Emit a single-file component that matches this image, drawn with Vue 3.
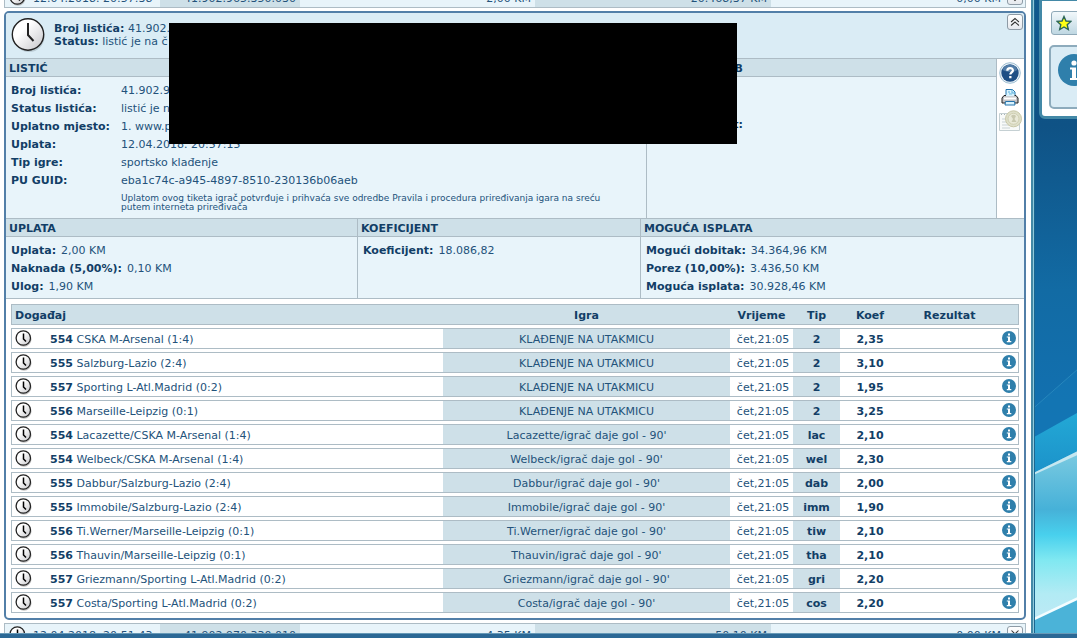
<script setup>
const labels = [
  ['Broj listića:', '41.902.9'],
  ['Status listića:', 'listić je n'],
  ['Uplatno mjesto:', '1. www.p'],
  ['Uplata:', '12.04.2018. 20:57:15'],
  ['Tip igre:', 'sportsko klađenje'],
  ['PU GUID:', 'eba1c74c-a945-4897-8510-230136b06aeb'],
]
const sums = [
  { title: 'UPLATA', lines: [['Uplata:', '2,00 KM'], ['Naknada (5,00%):', '0,10 KM'], ['Ulog:', '1,90 KM']] },
  { title: 'KOEFICIJENT', lines: [['Koeficijent:', '18.086,82']] },
  { title: 'MOGUĆA ISPLATA', lines: [['Mogući dobitak:', '34.364,96 KM'], ['Porez (10,00%):', '3.436,50 KM'], ['Moguća isplata:', '30.928,46 KM']] },
]
const main = 'KLAĐENJE NA UTAKMICU'
const events = [
  ['554', 'CSKA M-Arsenal (1:4)', main, '2', '2,35'],
  ['555', 'Salzburg-Lazio (2:4)', main, '2', '3,10'],
  ['557', 'Sporting L-Atl.Madrid (0:2)', main, '2', '1,95'],
  ['556', 'Marseille-Leipzig (0:1)', main, '2', '3,25'],
  ['554', 'Lacazette/CSKA M-Arsenal (1:4)', "Lacazette/igrač daje gol - 90'", 'lac', '2,10'],
  ['554', 'Welbeck/CSKA M-Arsenal (1:4)', "Welbeck/igrač daje gol - 90'", 'wel', '2,30'],
  ['555', 'Dabbur/Salzburg-Lazio (2:4)', "Dabbur/igrač daje gol - 90'", 'dab', '2,00'],
  ['555', 'Immobile/Salzburg-Lazio (2:4)', "Immobile/igrač daje gol - 90'", 'imm', '1,90'],
  ['556', 'Ti.Werner/Marseille-Leipzig (0:1)', "Ti.Werner/igrač daje gol - 90'", 'tiw', '2,10'],
  ['556', 'Thauvin/Marseille-Leipzig (0:1)', "Thauvin/igrač daje gol - 90'", 'tha', '2,10'],
  ['557', 'Griezmann/Sporting L-Atl.Madrid (0:2)', "Griezmann/igrač daje gol - 90'", 'gri', '2,20'],
  ['557', 'Costa/Sporting L-Atl.Madrid (0:2)', "Costa/igrač daje gol - 90'", 'cos', '2,20'],
]
</script>

<template>
  <div class="page">
    <svg class="defs" width="0" height="0" aria-hidden="true">
      <defs>
        <linearGradient id="face" x1="0" y1="0" x2="1" y2="1">
          <stop offset="0.35" stop-color="#fff" /><stop offset="1" stop-color="#c4c4c8" />
        </linearGradient>
        <symbol id="clock" viewBox="0 0 34 34">
          <circle cx="18" cy="18.500" r="15.500" fill="#9aa9b2" opacity=".5" />
          <circle cx="17" cy="16.500" r="15.700" fill="url(#face)" stroke="#222" stroke-width="1.400" />
          <path d="M17 5v12l5.500 6" fill="none" stroke="#222" stroke-width="2" />
        </symbol>
        <symbol id="clock-small" viewBox="0 0 17 17">
          <circle cx="9" cy="9.200" r="7.500" fill="#999" opacity=".6" />
          <circle cx="8.300" cy="8" r="7.200" fill="url(#face)" stroke="#222" stroke-width="1.300" />
          <path d="M8.500 3.500v5.500l2.500 2.500" fill="none" stroke="#000" stroke-width="1.500" />
        </symbol>
        <symbol id="info" viewBox="0 0 14 14">
          <circle cx="7" cy="7" r="7" fill="#2f7fab" />
          <path d="M6 2.500h2v2H6zM4.800 5.500H8V10h1.300v1.200H4.800V10H6V6.600H4.800z" fill="#fff" />
        </symbol>
      </defs>
    </svg>

    <div class="columns">
      <main class="content">
        <div class="clip-top">
          <div class="strip">
            <svg class="small-clock"><use href="#clock-small" /></svg>
            <span class="date">12.04.2018. 20:57:38</span>
            <span class="num tinted">41.902.965.350.030</span>
            <span class="num">2,00 KM</span>
            <span class="num tinted">20.468,37 KM</span>
            <span class="num">0,00 KM</span>
            <button class="toggle" aria-label="Otvori"><svg viewBox="0 0 16 16"><path d="M4 4l4 4 4-4M4 8l4 4 4-4" /></svg></button>
          </div>
        </div>

        <section class="ticket">
          <header class="ticket-head">
            <svg class="big-clock"><use href="#clock" /></svg>
            <p><b>Broj listića:</b> 41.902.9<br /><b>Status:</b> listić je na č</p>
            <button class="toggle" aria-label="Zatvori"><svg viewBox="0 0 16 16"><path d="M3.500 8L8 4l4.500 4M3.500 12L8 8l4.500 4" /></svg></button>
          </header>

          <div class="details">
            <section class="detail-main">
              <h2>LISTIĆ</h2>
              <dl class="labels">
                <div v-for="l in labels" :key="l[0]"><dt>{{ l[0] }}</dt><dd>{{ l[1] }}</dd></div>
              </dl>
              <p class="notice">Uplatom ovog tiketa igrač potvrđuje i prihvaća sve odredbe Pravila i procedura priređivanja igara na sreću putem interneta priređivača</p>
            </section>
            <section class="detail-extra">
              <h2><span>B</span></h2>
              <b class="extra-label">t:</b>
            </section>
            <nav class="tools">
              <button aria-label="Pomoć">
                <svg width="22" height="22" viewBox="0 0 22 22">
                  <circle cx="11" cy="11" r="10.300" fill="#edf4f8" stroke="#9fbfd3" />
                  <circle cx="11" cy="11" r="8.700" fill="#1e4f85" />
                  <path d="M3.500 8a8 8 0 0 1 15 0q-7 4-15 0" fill="#6f96bb" opacity=".65" />
                  <path d="M8.300 8.700c0-3.400 5.600-3.400 5.600-.3 0 2-2.600 2-2.600 4.200" fill="none" stroke="#fff" stroke-width="2.200" />
                  <path d="M10.200 14h2.300v2.200h-2.300z" fill="#fff" />
                </svg>
              </button>
              <button aria-label="Ispis">
                <svg width="18" height="18" viewBox="0 0 18 18">
                  <path d="M5 8V1.500h6.500L14 4v4" fill="#d9f2fd" stroke="#2474ad" />
                  <path d="M11 1.500V5h3M7 4h2M8 6h3" fill="none" stroke="#57aeda" />
                  <path d="M3 7.500h12l2 2.500v5H1v-5z" fill="#c2c2c5" stroke="#222" />
                  <path d="M5 7.500h8.500" stroke="#d9f2fd" stroke-width="1.500" />
                  <path d="M3 10.500h12" stroke="#fff" stroke-width="2" />
                  <path d="M4.500 13.500h9l.5 3.500H4z" fill="#d9f2fd" stroke="#2474ad" />
                </svg>
              </button>
              <button aria-label="Isplata">
                <svg width="24" height="22" viewBox="0 0 24 22">
                  <path d="M1.500 3.500h20v17h-20z" fill="#f8faf9" stroke="#c5d0d3" />
                  <path d="M3 4.500h12" stroke="#a8b2b4" stroke-dasharray="1 2" />
                  <path d="M4 9h8M4 12h9M4 15h12M4 18h8" stroke="#c9d2d5" />
                  <circle cx="15.500" cy="8.800" r="8" fill="#dedfca" stroke="#c9c8a8" />
                  <circle cx="15.500" cy="8.800" r="5.500" fill="#e9e9d8" stroke="#cfcfb2" />
                  <path d="M13 6q2.500-2.500 5 0l-1.500 3 2 3h-5l1.500-3z" fill="#c9c9b0" />
                </svg>
              </button>
            </nav>
          </div>

          <div class="sums">
            <section v-for="s in sums" :key="s.title">
              <h2>{{ s.title }}</h2>
              <p v-for="l in s.lines" :key="l[0]"><b>{{ l[0] }}</b><span>{{ l[1] }}</span></p>
            </section>
          </div>

          <div class="table-wrap">
            <table>
              <colgroup><col /><col class="c-game" /><col class="c-time" /><col class="c-tip" /><col class="c-koef" /><col class="c-res" /><col class="c-info" /></colgroup>
              <thead>
                <tr><th class="first">Događaj</th><th>Igra</th><th>Vrijeme</th><th>Tip</th><th>Koef</th><th>Rezultat</th><th></th></tr>
              </thead>
              <tbody>
                <tr v-for="(e, i) in events" :key="i">
                  <td class="first"><div class="event"><svg class="small-clock"><use href="#clock-small" /></svg><span><b>{{ e[0] }}</b> {{ e[1] }}</span></div></td>
                  <td class="tinted">{{ e[2] }}</td>
                  <td class="time">čet,21:05</td>
                  <td class="tinted"><b>{{ e[3] }}</b></td>
                  <td><b>{{ e[4] }}</b></td>
                  <td></td>
                  <td class="last"><button class="info" aria-label="Info"><svg width="14" height="14"><use href="#info" /></svg></button></td>
                </tr>
              </tbody>
            </table>
          </div>
          <div class="cover"></div>
        </section>

        <div class="clip-bottom">
          <div class="strip">
            <svg class="small-clock"><use href="#clock-small" /></svg>
            <span class="date">12.04.2018. 20:51:43</span>
            <span class="num tinted">41.902.970.330.010</span>
            <span class="num">4,35 KM</span>
            <span class="num tinted">50,10 KM</span>
            <span class="num">0,00 KM</span>
            <button class="toggle" aria-label="Otvori"><svg viewBox="0 0 16 16"><path d="M4 4l4 4 4-4M4 8l4 4 4-4" /></svg></button>
          </div>
        </div>
      </main>

      <aside class="side">
        <svg class="scene" viewBox="0 0 46 638" preserveAspectRatio="none" aria-hidden="true">
          <defs>
            <linearGradient id="deep" x1="0" y1="0" x2="0" y2="1">
              <stop offset="0" stop-color="#105a8e" /><stop offset=".28" stop-color="#0f5285" /><stop offset=".65" stop-color="#126ba4" /><stop offset="1" stop-color="#1272b4" />
            </linearGradient>
            <linearGradient id="band" x1="0" y1="0" x2="0" y2="1">
              <stop offset="0" stop-color="#23a9d6" /><stop offset="1" stop-color="#1b8fc8" />
            </linearGradient>
            <linearGradient id="water" x1="0" y1="0" x2="0" y2="1">
              <stop offset="0" stop-color="#7dcbe1" /><stop offset=".35" stop-color="#46b1d8" /><stop offset=".5" stop-color="#48d0ed" /><stop offset=".65" stop-color="#80e8f1" /><stop offset=".85" stop-color="#b2ebf4" /><stop offset="1" stop-color="#bde9f5" />
            </linearGradient>
          </defs>
          <path d="M0 0h46v450H0z" fill="url(#deep)" />
          <path d="M0 410l46-39v46L0 440z" fill="#1478b6" opacity=".6" />
          <path d="M0 410l46-39" stroke="#3796c5" opacity=".6" />
          <path d="M0 440l46-25v45L0 484z" fill="url(#band)" />
          <path d="M0 476l46-22v170H0z" fill="url(#water)" />
          <path d="M0 476l46-22v4L0 478z" fill="#c6e7f0" />
          <path d="M0 623l46-21v40H0z" fill="#4bb3d8" />
          <path d="M0 622l46-21v3L0 625z" fill="#f4fdff" />
        </svg>
        <div class="side-box">
          <button class="fav" aria-label="Favoriti">
            <svg width="16" height="16" viewBox="0 0 16 16"><path d="M8 1.500l2 4.500 4.800.4-3.600 3.300 1.100 4.800L8 12l-4.300 2.500 1.100-4.800L1.200 6.400 6 6z" fill="#ffff14" stroke="#2b6556" stroke-width="1.400" /></svg>
          </button>
          <div class="side-info">
            <svg width="32" height="32" viewBox="0 0 32 32"><circle cx="16" cy="16" r="16" fill="#2f7fab" /><circle cx="16" cy="9" r="2.600" fill="#fff" /><path d="M12 13.500h6V24h2v2h-8v-2h2v-8.500h-2z" fill="#fff" /></svg>
          </div>
        </div>
      </aside>
    </div>
    <footer class="bottom-bar"></footer>
  </div>
</template>

<style>
body { margin: 0; overflow: hidden; }
</style>

<style scoped>
.page { height: 100vh; display: flex; flex-direction: column; font: 11px/18px Verdana, "DejaVu Sans", sans-serif; color: #23527a; background: #fff; }
.page * { box-sizing: border-box; }
.defs { position: absolute; }
.columns { flex: 1; min-height: 0; display: flex; }
.content { flex: 1; min-width: 0; display: flex; flex-direction: column; padding: 0 5px 0 4px; overflow: hidden; }
b, h2, th, dt { font-weight: bold; color: #123e66; }
p, dl, dd, h2 { margin: 0; }
button { padding: 0; border: 0; background: none; font: inherit; cursor: pointer; }
.clip-top { height: 8px; display: flex; flex-direction: column; justify-content: flex-end; overflow: hidden; margin-bottom: 3px; flex: none; }
.clip-bottom { flex: 1; min-height: 0; overflow: hidden; margin-top: 3px; }
.strip { flex: none; height: 22px; display: grid; grid-template-columns: 28px 127px 140px 235px 236px 1fr 20px; align-items: center; border: 1px solid #adbcc5; background: #e8f4fa; line-height: 16px; }
.strip span { padding-top: 4px; }
.strip .small-clock { margin-left: 4px; }
.strip .num { padding-right: 4px; text-align: right; white-space: nowrap; }
.date { white-space: nowrap; }
.tinted { background: #cee0e8; }
.small-clock { width: 17px; height: 17px; display: block; flex: none; }
.toggle { width: 16px; height: 16px; border: 1px solid #8e9ba6; border-radius: 3px; background: linear-gradient(#fff, #e6e9ee); display: block; }
.strip .toggle { margin-left: 2px; }
.toggle svg { display: block; width: 14px; height: 14px; fill: none; stroke: #333; stroke-width: 1.2; }

.ticket { flex: none; position: relative; border: 2px solid #527fa8; border-radius: 5px; background: #fff; overflow: hidden; }
.ticket-head { display: flex; height: 45px; background: #daecf5; padding: 0 1px 0 5px; line-height: 13px; }
.ticket-head p { flex: 1; padding: 9px 0 0 9px; }
.big-clock { width: 34px; height: 34px; margin-top: 5px; flex: none; }
.ticket-head .toggle { margin-top: 1px; }
.cover { position: absolute; left: 163px; top: 10px; width: 568px; height: 121px; background: #000; }

h2 { font-size: 11px; line-height: 19px; height: 18px; padding-left: 3px; background: #cee0e8; border-bottom: 1px solid #adbcc5; }
.details { display: grid; grid-template-columns: 641fr 349fr 28px; border-top: 1px solid #adbcc5; background: #e8f4fa; min-height: 160px; }
.detail-main { border-right: 1px solid #adbcc5; }
.labels { padding: 5px 0 4px 5px; }
.labels div { display: flex; }
.labels dt { width: 110px; }
.notice { font-size: 9px; line-height: 9px; padding: 0 20px 5px 115px; }
.detail-extra h2 { padding: 0; }
.detail-extra h2 span, .extra-label { display: block; width: 96px; text-align: right; }
.extra-label { margin-top: 39px; }
.tools { background: #fff; border-left: 1px solid #adbcc5; display: flex; flex-direction: column; align-items: center; padding: 3px 2px 0 0; gap: 4px; }
.tools svg { display: block; }

.sums { display: grid; grid-template-columns: 351fr 283fr 384fr; border-top: 1px solid #adbcc5; border-bottom: 1px solid #adbcc5; background: #e8f4fa; }
.sums section { padding-bottom: 2px; }
.sums section + section { border-left: 1px solid #adbcc5; }
.sums h2 { margin-bottom: 5px; }
.sums p { padding-left: 5px; display: flex; gap: 5px; }

.table-wrap { padding: 2px 5px; }
table { width: 100%; table-layout: fixed; border-collapse: separate; border-spacing: 0 3px; }
.c-game { width: 287px; } .c-time { width: 63px; } .c-tip { width: 47px; } .c-koef { width: 60px; } .c-res { width: 99px; } .c-info { width: 20px; }
th, td { height: 21px; padding: 2px 0 0; text-align: center; white-space: nowrap; line-height: 17px; border: solid #adbcc5; border-width: 1px 0; }
th { background: #cee0e8; }
th:last-child, td.last { border-right-width: 1px; }
td.last { padding: 0 0 1px; }
.first { border-left-width: 1px; text-align: left; padding-left: 3px; }
td.first { padding-top: 0; }
.time { padding-left: 3px; }
.event { display: flex; align-items: center; gap: 18px; height: 19px; }
.event span { padding-top: 2px; }
.info { display: block; margin: 0 auto; width: 14px; height: 14px; }
.info svg { display: block; }

.side { flex: 0 0 46px; position: relative; overflow: hidden; border-left: 2px solid #4389a7; box-shadow: inset 1px 0 #91cadb, inset 2px 0 #1b6690; }
.scene { position: absolute; inset: 0 0 0 2px; width: 100%; height: 100%; }
.side-box { position: relative; width: 120px; height: 119px; margin-left: 6px; border: 3px solid #4389a7; border-width: 1px 3px 3px; border-radius: 0 0 6px 6px; background: #fff; padding: 10px 7px 0; display: flex; flex-direction: column; gap: 10px; }
.fav { flex: none; height: 24px; margin-left: 2px; padding-left: 4px; border: 1px solid #8fa9b8; border-radius: 3px; background: linear-gradient(#f2f8fb, #bfd7e2); display: flex; align-items: center; }
.side-info { flex: none; height: 64px; border: 2px solid #8dabbc; border-radius: 5px; background: #daecf5; padding: 7px; }
.side-info svg { display: block; }
.bottom-bar { flex: none; height: 5px; background: #2b6895; border-top: 1px solid #6699b7; }
</style>
